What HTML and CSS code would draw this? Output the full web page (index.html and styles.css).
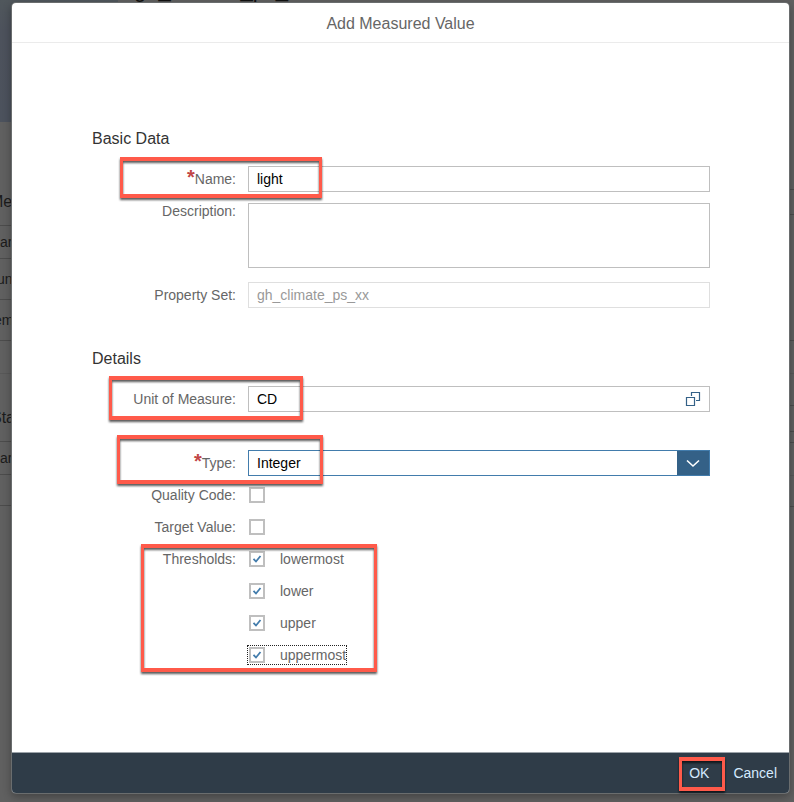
FILE: index.html
```html
<!DOCTYPE html>
<html lang="en">
<head>
<meta charset="utf-8">
<title>Add Measured Value</title>
<link rel="stylesheet" href="styles.css">
</head>
<body>
<div class="page" aria-hidden="true">
  <div class="banner"><div class="banner-image"></div><div class="page-title">gh_climate_ps_xx</div></div>
  <div class="page-columns">
    <div class="column left">
      <div class="row h1 big">Me</div>
      <div class="row h2 cell-a">ar</div>
      <div class="row h3 cell-b">un</div>
      <div class="row h3 cell-c">em</div>
      <div class="row h4 faint"></div>
      <div class="row h5 big status">Sta</div>
      <div class="row h2 cell-a">ar</div>
      <div class="row h6"></div>
    </div>
    <div class="column right">
      <div class="row r1"></div>
      <div class="row r2"></div>
      <div class="row r3"></div>
      <div class="row r4 faint"></div>
      <div class="row r5"></div>
      <div class="row r6"></div>
      <div class="row r7"></div>
      <div class="row r4 faint"></div>
      <div class="row h6"></div>
    </div>
  </div>
</div>

<div class="dialog" role="dialog">
  <header class="dialog-header">Add Measured Value</header>
  <main class="dialog-body">
    <section class="group">
      <h2>Basic Data</h2>
      <div class="field name-field"><label><b>*</b>Name:</label><div class="input">light</div></div>
      <div class="field desc-field"><label>Description:</label><div class="input area"></div></div>
      <div class="field"><label>Property Set:</label><div class="input disabled">gh_climate_ps_xx</div></div>
    </section>
    <section class="group details">
      <h2>Details</h2>
      <div class="field unit-field"><label>Unit of Measure:</label><div class="input">CD
        <svg class="help-icon" width="16" height="16" viewBox="0 0 16 16"><path d="M1.500 6.500h8v8h-8zM6.500 5V1.500h8v8H11"/></svg></div></div>
      <div class="field"><label><b>*</b>Type:</label><div class="input select">Integer
        <span class="arrow"><svg width="14" height="9" viewBox="0 0 14 9"><path d="M1 1.500l6 5.500l6-5.500"/></svg></span></div></div>
      <div class="check-row"><label>Quality Code:</label><span class="check"><i></i></span></div>
      <div class="check-row"><label>Target Value:</label><span class="check"><i></i></span></div>
      <div class="check-row"><label>Thresholds:</label><span class="check"><i><svg viewBox="0 0 12 12"><path d="M2.500 5.800l2.500 2.700l4.500-5.500"/></svg></i>lowermost</span></div>
      <div class="check-row"><label></label><span class="check"><i><svg viewBox="0 0 12 12"><path d="M2.500 5.800l2.500 2.700l4.500-5.500"/></svg></i>lower</span></div>
      <div class="check-row"><label></label><span class="check"><i><svg viewBox="0 0 12 12"><path d="M2.500 5.800l2.500 2.700l4.500-5.500"/></svg></i>upper</span></div>
      <div class="check-row"><label></label><span class="check focused"><i><svg viewBox="0 0 12 12"><path d="M2.500 5.800l2.500 2.700l4.500-5.500"/></svg></i>uppermost</span></div>
    </section>
  </main>
  <footer class="dialog-footer"><span>OK</span><span>Cancel</span></footer>
</div>

<div class="mark mark-name"></div>
<div class="mark mark-unit"></div>
<div class="mark mark-type"></div>
<div class="mark mark-thresholds"></div>
<div class="mark mark-ok"></div>
</body>
</html>
```
FILE: styles.css
```css
* { box-sizing: border-box; }
body {
  margin: 0;
  width: 794px;
  height: 802px;
  position: relative;
  overflow: hidden;
  background: #606060;
  font: 14px/20px "Liberation Sans", Arial, sans-serif;
}

/* dimmed page behind the dialog */
.page { position: absolute; inset: 0; overflow: hidden; color: #1b1b1b; }
.banner { height: 122px; display: flex; }
.banner-image { width: 118px; background: linear-gradient(#50575c, #4d525c 25%, #4c525d); }
.page-title { margin: -21px 0 0 16px; font-size: 22px; line-height: 22px; height: 26px; color: #111; }
.page-columns { display: flex; justify-content: space-between; }
.column { overflow: hidden; }
.left { width: 12px; }
.right { width: 5px; }
.row { border-bottom: 1px solid #4c4c4c; display: flex; align-items: center; white-space: nowrap; }
.row.faint { border-color: #585858; }
.h1 { height: 104px; }
.h2 { height: 33px; }
.h3 { height: 41px; }
.h4 { height: 33px; }
.h5 { height: 68px; }
.h6 { height: 31px; }
.big { font-size: 16px; align-items: flex-end; padding-bottom: 13px; text-indent: -10px; }
.status { text-indent: -9px; }
.cell-b { text-indent: -3px; }
.cell-c { text-indent: -6px; }
.r1 { height: 68px; }
.r2 { height: 25px; }
.r3 { height: 126px; }
.r4 { height: 33px; }
.r5 { height: 32px; }
.r6 { height: 26px; }
.r7 { height: 11px; }

.dialog {
  position: absolute;
  left: 12px;
  top: 3px;
  width: 777px;
  height: 790px;
  display: flex;
  flex-direction: column;
  background: #fff;
  border-radius: 4px;
  overflow: hidden;
  box-shadow: 0 0 0 1px #6a6d6e, 0 3px 8px 1px rgba(0, 0, 0, .3);
}
.dialog-header {
  height: 40px;
  border-bottom: 1px solid #ebebeb;
  text-align: center;
  font-size: 16px;
  line-height: 42px;
  color: #666;
}
.dialog-body { flex: 1; padding: 86px 79px 0 80px; }
.group h2 { margin: 0; height: 37px; font-size: 16px; line-height: 20px; font-weight: normal; color: #333; }
.details { margin-top: 41px; }
.field { display: flex; margin-bottom: 14px; }
.name-field { margin: 0 0 11px; }
.unit-field { margin-bottom: 38px; }
.field label, .check-row label { width: 144px; margin-right: 12px; text-align: right; color: #666; }
.field label { padding-top: 3px; }
.desc-field label { padding-top: 0; margin-top: -2px; }
label b { color: #c14646; font-size: 20px; line-height: 10px; vertical-align: -2px; position: relative; top: -2px; }
.input {
  width: 462px;
  height: 26px;
  border: 1px solid #bfbfbf;
  padding: 0 8px;
  line-height: 25px;
  color: #000;
  display: flex;
  justify-content: space-between;
  align-items: center;
}
.area { height: 65px; }
.disabled { border-color: #dfdfdf; color: #999; }
.help-icon { fill: none; stroke: #346187; stroke-width: 1.2; }
.select { border-color: #427cac; padding-right: 0; }
.arrow { width: 32px; height: 24px; background: #346187; display: flex; align-items: center; justify-content: center; }
.arrow svg { fill: none; stroke: #fff; stroke-width: 1.6; }
.check-row { display: flex; height: 32px; align-items: center; }
.field + .check-row { margin-top: -11px; }
.check { height: 20px; display: flex; align-items: center; color: #666; margin-left: -1px; padding: 0 0 0 2px; }
.check i { width: 16px; height: 16px; border: 2px solid #bfbfbf; margin-right: 15px; display: block; }
.check i svg { display: block; width: 12px; height: 12px; fill: none; stroke: #427cac; stroke-width: 1.8; }
.focused { outline: 1px dotted #222; outline-offset: 0; margin-left: 0; padding-left: 1px; height: 18px; }
.dialog-footer {
  height: 41px;
  border-top: 1px solid #9ca3a9;
  background: #2f3c48;
  color: #d5eaff;
  display: flex;
  justify-content: flex-end;
  gap: 24px;
  padding-right: 12px;
  line-height: 40px;
}

/* callout frames laid over the form */
.mark { position: absolute; border: 3px solid #ff5a4a; border-top-width: 4px; border-bottom-width: 4px; filter: drop-shadow(0 2px 1px rgba(0, 0, 0, .65)); }
.mark-name { left: 120px; top: 157px; width: 202px; height: 41px; }
.mark-unit { left: 109px; top: 376px; width: 194px; height: 44px; }
.mark-type { left: 117px; top: 435px; width: 206px; height: 49px; }
.mark-thresholds { left: 141px; top: 544px; width: 236px; height: 128px; }
.mark-ok { left: 679px; top: 757px; width: 46px; height: 34px; }
```
